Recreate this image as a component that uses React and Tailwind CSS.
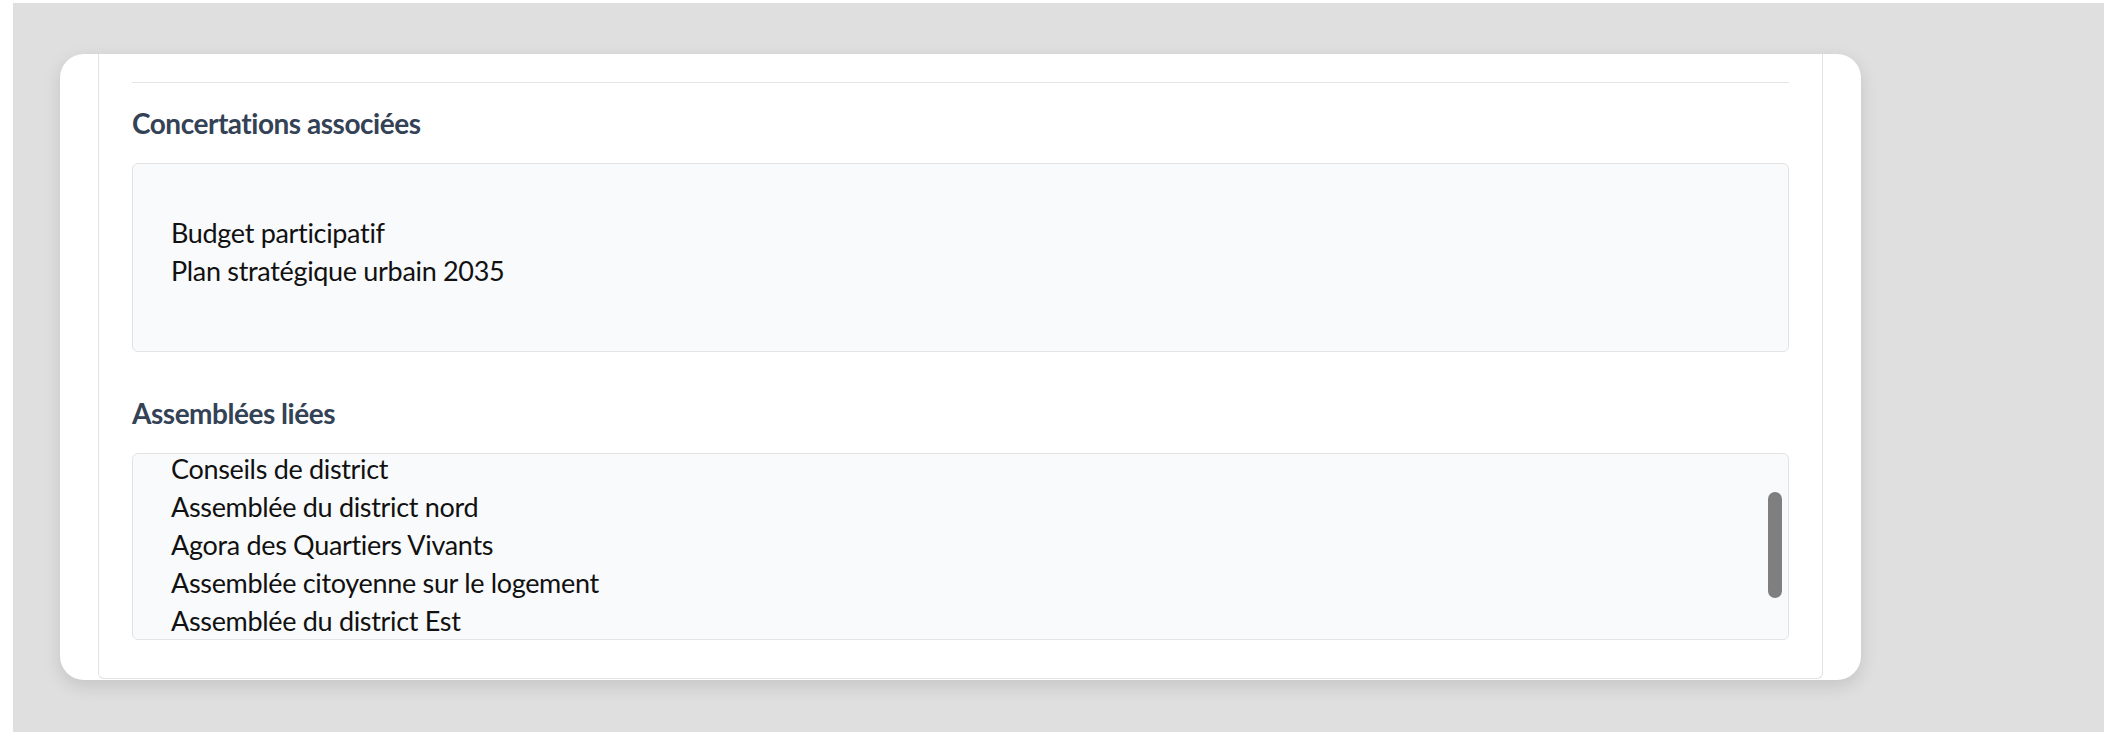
const CONCERTATIONS = ['Budget participatif', 'Plan stratégique urbain 2035'];

const ASSEMBLIES = [
  'Conseils de district',
  'Assemblée du district nord',
  'Agora des Quartiers Vivants',
  'Assemblée citoyenne sur le logement',
  'Assemblée du district Est',
];

function SectionTitle({ children, className = '' }) {
  return (
    <h2 className={`text-[28px] leading-[34px] font-bold tracking-[-0.017em] text-[#344256] ${className}`}>
      {children}
    </h2>
  );
}

export default function App() {
  return (
    <div
      className="w-[2104px] h-[747px] bg-white pl-[13px] pt-[3px] overflow-hidden"
      style={{ fontFamily: 'Lato, "Noto Sans", sans-serif' }}
    >
      <div className="h-[729px] bg-[#dfdfdf] pl-[47px] pt-[51px]">
        <div className="w-[1801px] h-[626px] bg-white rounded-[24px] overflow-hidden px-[38px] shadow-[0_6px_18px_rgba(0,0,0,0.12)]">
          <div className="h-[625px] border-x border-b border-[#e2e2e2] rounded-b-[6px] px-[33px] pt-[28px]">
            <div className="h-px bg-[#e5e5e5]" />

            <SectionTitle className="mt-[23px]">Concertations associées</SectionTitle>
            <div className="mt-[23px] h-[189px] bg-[#f9fafb] border border-[#e3e3e3] rounded-[6px] pl-[38px] pt-[50px]">
              <ul className="text-[27px] leading-[38px] tracking-[-0.012em] text-[#111]">
                {CONCERTATIONS.map(item => (
                  <li key={item}>{item}</li>
                ))}
              </ul>
            </div>

            <SectionTitle className="mt-[44px]">Assemblées liées</SectionTitle>
            <div className="relative mt-[23px] h-[187px] bg-[#f9fafb] border border-[#e3e3e3] rounded-[6px] overflow-hidden">
              <ul className="pl-[38px] mt-[-4px] text-[27px] leading-[38px] tracking-[-0.012em] text-[#111]">
                {ASSEMBLIES.map(item => (
                  <li key={item}>{item}</li>
                ))}
              </ul>
              {/* overlay scrollbar thumb */}
              <div className="absolute right-[6px] top-[38px] w-[14px] h-[106px] rounded-full bg-[#7f7f7f]" />
            </div>
          </div>
        </div>
      </div>
    </div>
  );
}
